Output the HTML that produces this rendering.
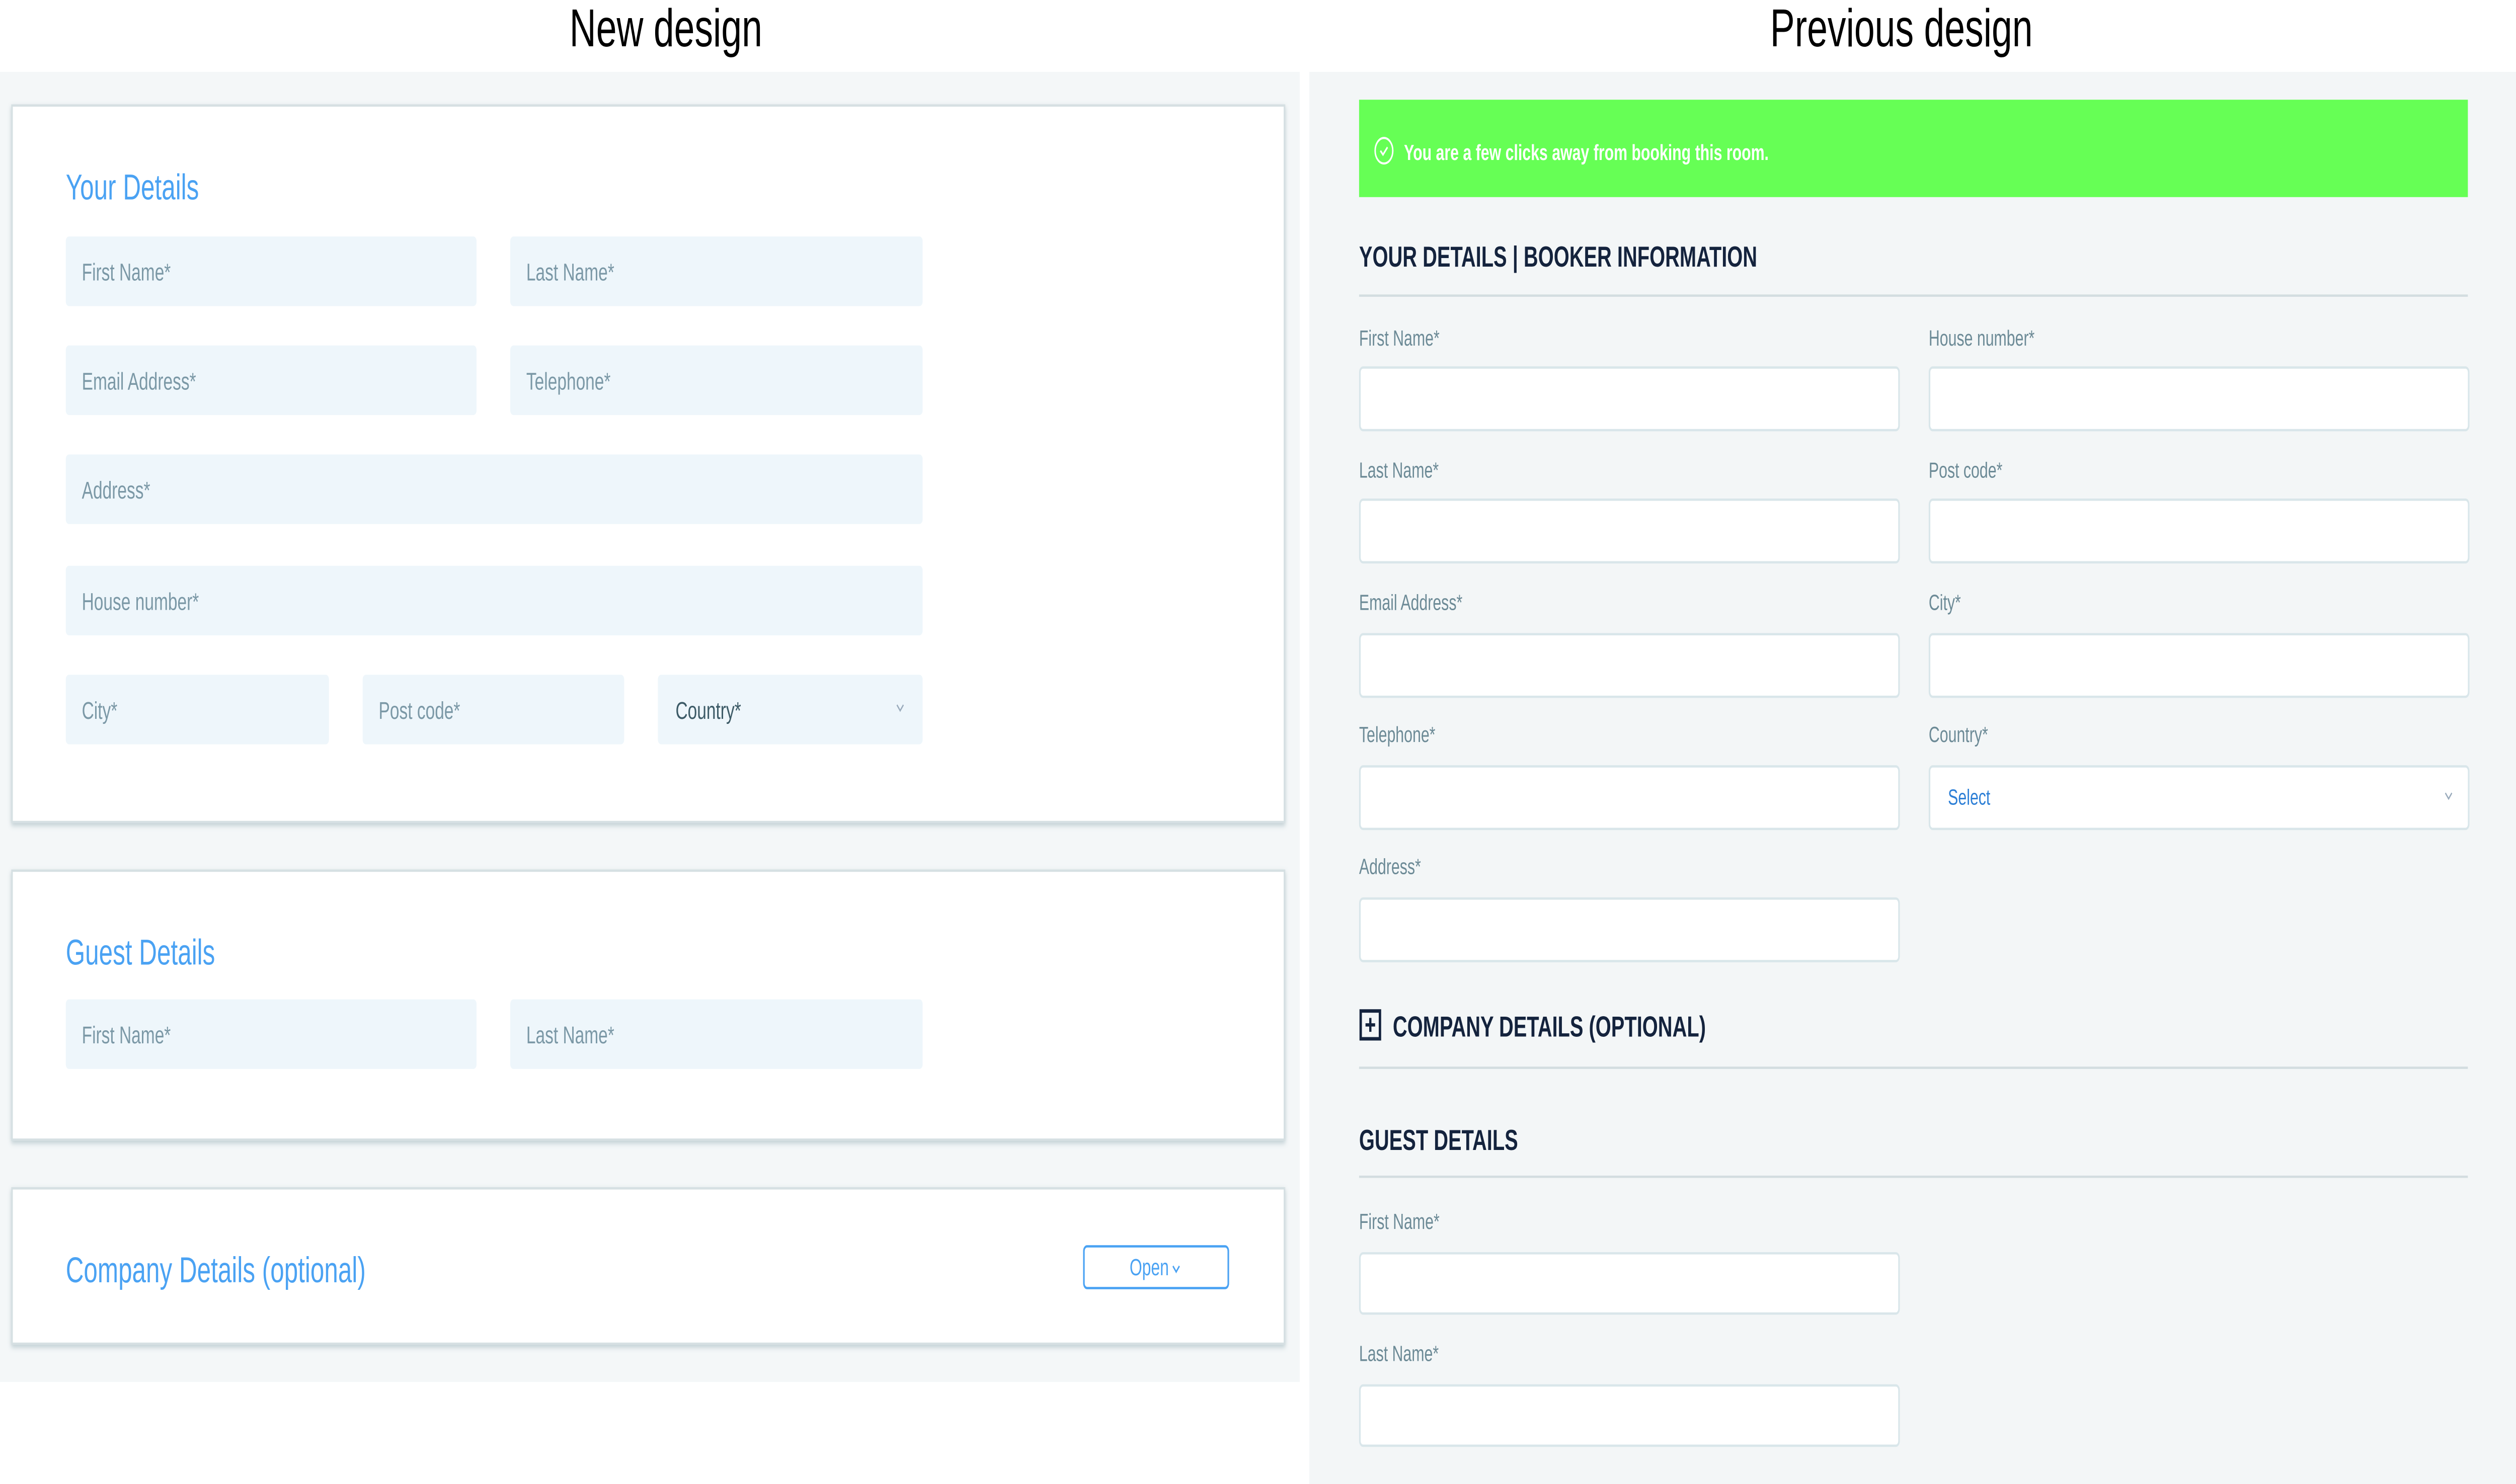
<!DOCTYPE html>
<html><head><meta charset="utf-8"><style>
html,body{margin:0;padding:0;background:#fff;width:100%;height:100%;overflow:hidden;}
svg{display:block;width:100vw;height:100vh;}
text{font-family:"Liberation Sans",sans-serif;white-space:pre;}
.ph{font-size:10.5px;fill:#7b98a6;}
.lb{font-size:9.5px;fill:#6c8a96;}
.h{font-size:15.5px;fill:#4aa2f3;}
.hd{font-size:12.5px;font-weight:bold;fill:#14233d;}
.in{fill:#eef6fb;}
.bx{fill:#fff;stroke:#d9e6ea;stroke-width:1;}
.card{fill:#fff;stroke:#d6e0e3;stroke-width:1;}
</style></head><body>
<svg viewBox="0 0 1568 640" preserveAspectRatio="none" xmlns="http://www.w3.org/2000/svg">
<defs><filter id="sh" x="-5%" y="-5%" width="110%" height="115%"><feDropShadow dx="0" dy="1" stdDeviation="1.2" flood-color="#7d9aa3" flood-opacity="0.45"/></filter></defs>
<rect width="1568" height="640" fill="#fff"/>
<text x="415" y="20" font-size="23" text-anchor="middle" fill="#000">New design</text>
<text x="1185" y="20" font-size="23" text-anchor="middle" fill="#000">Previous design</text>

<rect x="0" y="31" width="810" height="565" fill="#f4f7f8"/>
<rect class="card" x="7.5" y="45.5" width="793" height="309" filter="url(#sh)"/>
<text class="h" x="41" y="86">Your Details</text>
<rect class="in" x="41" y="102" width="256" height="30" rx="2"/><text class="ph" x="51" y="121">First Name*</text>
<rect class="in" x="318" y="102" width="257" height="30" rx="2"/><text class="ph" x="328" y="121">Last Name*</text>
<rect class="in" x="41" y="149" width="256" height="30" rx="2"/><text class="ph" x="51" y="168">Email Address*</text>
<rect class="in" x="318" y="149" width="257" height="30" rx="2"/><text class="ph" x="328" y="168">Telephone*</text>
<rect class="in" x="41" y="196" width="534" height="30" rx="2"/><text class="ph" x="51" y="215">Address*</text>
<rect class="in" x="41" y="244" width="534" height="30" rx="2"/><text class="ph" x="51" y="263">House number*</text>
<rect class="in" x="41" y="291" width="164" height="30" rx="2"/><text class="ph" x="51" y="310">City*</text>
<rect class="in" x="226" y="291" width="163" height="30" rx="2"/><text class="ph" x="236" y="310">Post code*</text>
<rect class="in" x="410" y="291" width="165" height="30" rx="2"/><text class="ph" x="421" y="310" style="fill:#3c5a66">Country*</text>
<path d="M559 304 l2 2.5 l2 -2.5" fill="none" stroke="#9ab" stroke-width="0.7"/>

<rect class="card" x="7.5" y="375.5" width="793" height="116" filter="url(#sh)"/>
<text class="h" x="41" y="416">Guest Details</text>
<rect class="in" x="41" y="431" width="256" height="30" rx="2"/><text class="ph" x="51" y="450">First Name*</text>
<rect class="in" x="318" y="431" width="257" height="30" rx="2"/><text class="ph" x="328" y="450">Last Name*</text>

<rect class="card" x="7.5" y="512.5" width="793" height="67" filter="url(#sh)"/>
<text class="h" x="41" y="553">Company Details (optional)</text>
<rect x="675.5" y="537.5" width="90" height="18" rx="2" fill="#fff" stroke="#4aa2f3" stroke-width="1"/>
<text x="704" y="550" font-size="10" fill="#4aa2f3">Open</text>
<path d="M731 546 l2 2.5 l2 -2.5" fill="none" stroke="#4aa2f3" stroke-width="0.8"/>

<rect x="816" y="31" width="752" height="609" fill="#f3f6f7"/>
<rect x="847" y="43" width="691" height="42" fill="#66ff55"/>
<circle cx="862.5" cy="65" r="5.5" fill="none" stroke="#fff" stroke-width="0.9"/>
<path d="M860.3 65 l1.6 1.7 l2.8 -3.2" fill="none" stroke="#fff" stroke-width="0.9"/>
<text x="875" y="69" font-size="9.5" font-weight="bold" fill="#fff">You are a few clicks away from booking this room.</text>
<text class="hd" x="847" y="115">YOUR DETAILS | BOOKER INFORMATION</text>
<rect x="847" y="127" width="691" height="1" fill="#d3dde0"/>

<text class="lb" x="847" y="149">First Name*</text><text class="lb" x="1202" y="149">House number*</text>
<rect class="bx" x="847.5" y="158.5" width="336" height="27" rx="2"/><rect class="bx" x="1202.5" y="158.5" width="336" height="27" rx="2"/>
<text class="lb" x="847" y="206">Last Name*</text><text class="lb" x="1202" y="206">Post code*</text>
<rect class="bx" x="847.5" y="215.5" width="336" height="27" rx="2"/><rect class="bx" x="1202.5" y="215.5" width="336" height="27" rx="2"/>
<text class="lb" x="847" y="263">Email Address*</text><text class="lb" x="1202" y="263">City*</text>
<rect class="bx" x="847.5" y="273.5" width="336" height="27" rx="2"/><rect class="bx" x="1202.5" y="273.5" width="336" height="27" rx="2"/>
<text class="lb" x="847" y="320">Telephone*</text><text class="lb" x="1202" y="320">Country*</text>
<rect class="bx" x="847.5" y="330.5" width="336" height="27" rx="2"/><rect class="bx" x="1202.5" y="330.5" width="336" height="27" rx="2"/>
<text x="1214" y="347" font-size="9.5" fill="#2d7fd6">Select</text>
<path d="M1524 342 l2 2.5 l2 -2.5" fill="none" stroke="#9ab" stroke-width="0.7"/>
<text class="lb" x="847" y="377">Address*</text>
<rect class="bx" x="847.5" y="387.5" width="336" height="27" rx="2"/>

<rect x="848" y="436" width="12" height="12" fill="none" stroke="#14233d" stroke-width="1.5"/>
<path d="M854 439 v6 M851 442 h6" stroke="#14233d" stroke-width="1.4"/>
<text class="hd" x="868" y="447">COMPANY DETAILS (OPTIONAL)</text>
<rect x="847" y="460" width="691" height="1" fill="#d3dde0"/>
<text class="hd" x="847" y="496">GUEST DETAILS</text>
<rect x="847" y="507" width="691" height="1" fill="#d3dde0"/>
<text class="lb" x="847" y="530">First Name*</text>
<rect class="bx" x="847.5" y="540.5" width="336" height="26" rx="2"/>
<text class="lb" x="847" y="587">Last Name*</text>
<rect class="bx" x="847.5" y="597.5" width="336" height="26" rx="2"/>
</svg>
</body></html>
